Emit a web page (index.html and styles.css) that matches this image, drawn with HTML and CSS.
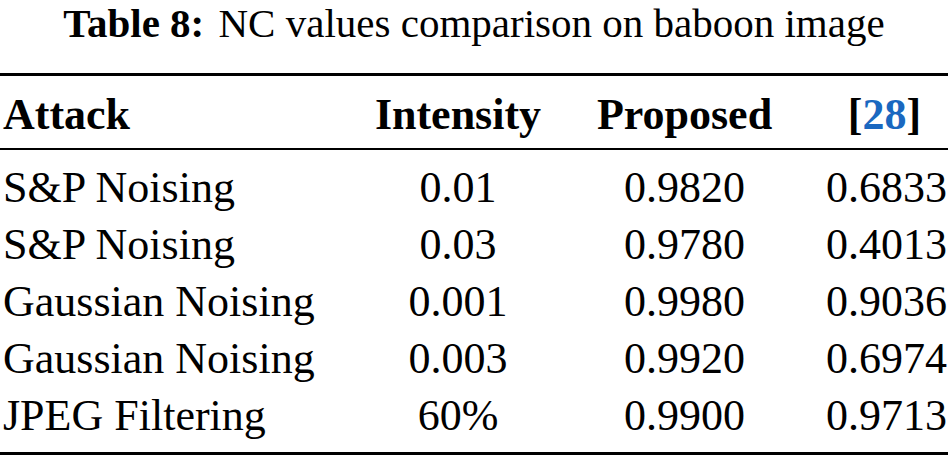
FILE: index.html
```html
<!DOCTYPE html>
<html lang="en">
<head>
<meta charset="utf-8">
<title>Table 8</title>
<link rel="stylesheet" href="styles.css">
</head>
<body>
<figure class="tbl">
  <div class="caption"><b class="cap-label">Table 8:</b> NC values comparison on baboon image</div>
  <div class="rule thick"></div>
  <div class="row head">
    <div class="c1">Attack</div>
    <div class="cc">Intensity</div>
    <div class="cc">Proposed</div>
    <div class="cc">[<span class="ref">28</span>]</div>
  </div>
  <div class="rule thin"></div>
  <div class="body">
    <div class="row">
      <div class="c1">S&amp;P Noising</div>
      <div class="cc">0.01</div>
      <div class="cc">0.9820</div>
      <div class="cc">0.6833</div>
    </div>
    <div class="row">
      <div class="c1">S&amp;P Noising</div>
      <div class="cc">0.03</div>
      <div class="cc">0.9780</div>
      <div class="cc">0.4013</div>
    </div>
    <div class="row">
      <div class="c1">Gaussian Noising</div>
      <div class="cc">0.001</div>
      <div class="cc">0.9980</div>
      <div class="cc">0.9036</div>
    </div>
    <div class="row">
      <div class="c1">Gaussian Noising</div>
      <div class="cc">0.003</div>
      <div class="cc">0.9920</div>
      <div class="cc">0.6974</div>
    </div>
    <div class="row">
      <div class="c1">JPEG Filtering</div>
      <div class="cc">60%</div>
      <div class="cc">0.9900</div>
      <div class="cc">0.9713</div>
    </div>
  </div>
  <div class="rule thick"></div>
</figure>
</body>
</html>
```

FILE: styles.css
```css
html, body {
  margin: 0;
  padding: 0;
  background: #fff;
}

body {
  font-family: "Liberation Serif", "Times New Roman", Times, "DejaVu Serif", serif;
  color: #000;
  width: 948px;
}

.tbl {
  margin: 0;
  display: flex;
  flex-direction: column;
}

.caption {
  font-size: 41px;
  line-height: 46px;
  height: 46px;
  text-align: center;
  margin-bottom: 27px;
  white-space: nowrap;
}

.cap-label {
  font-weight: bold;
  margin-right: 4px;
}

.rule {
  background: #000;
  width: 100%;
}

.rule.thick {
  height: 3px;
}

.rule.thin {
  height: 2px;
}

.row {
  display: grid;
  grid-template-columns: 1fr 170px 179px 117px;
  column-gap: 52px;
  padding: 0 5px 0 3px;
  font-size: 44px;
  line-height: 57px;
  height: 57px;
  white-space: nowrap;
}

.row.head {
  font-weight: bold;
  padding-top: 9.5px;
  padding-bottom: 5.5px;
}

.c1 {
  text-align: left;
}

.cc {
  text-align: center;
}

.ref {
  color: #1a68c0;
}

.body {
  padding: 8.5px 0;
  display: flex;
  flex-direction: column;
}
```
